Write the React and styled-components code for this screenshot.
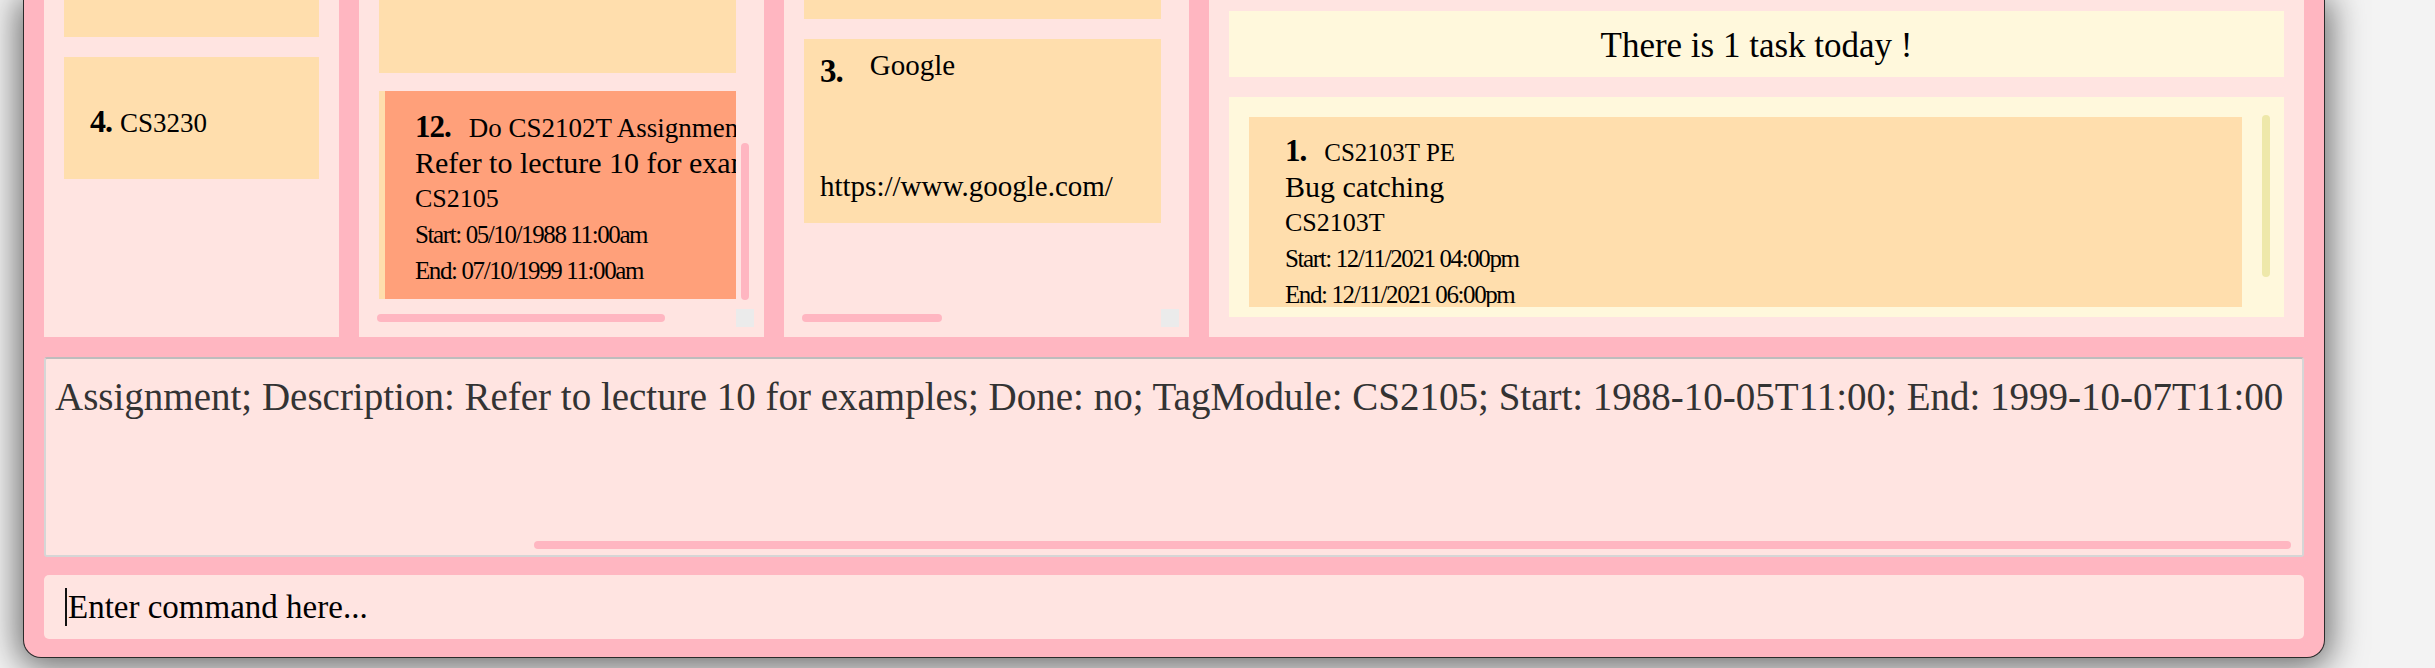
import React from 'react'
import styled, { createGlobalStyle } from 'styled-components'

const GlobalStyle = createGlobalStyle`
  html, body {
    margin: 0;
    padding: 0;
  }
  body {
    width: 2435px;
    height: 668px;
    overflow: hidden;
    background: #f3f3f3;
    font-family: 'Liberation Serif', 'Times New Roman', serif;
    color: #000;
  }
`

const Page = styled.div`
  height: 668px;
  box-sizing: border-box;
  padding-left: 23px;
  display: flex;
  align-items: flex-start;
`

const Window = styled.div`
  width: 2302px;
  height: 658px;
  box-sizing: border-box;
  background: #ffb6c1;
  border: 1px solid #2b2b2b;
  border-top: none;
  border-radius: 0 0 18px 18px;
  box-shadow: 0 4px 34px 6px rgba(0, 0, 0, 0.55);
  padding: 0 20px 18px;
  display: flex;
  flex-direction: column;
`

const PanelRow = styled.div`
  height: 337px;
  display: flex;
  gap: 20px;
`

const Panel = styled.div`
  width: ${(p) => p.$width}px;
  box-sizing: border-box;
  background: #ffe4e1;
  padding: ${(p) => p.$pad};
  display: flex;
  flex-direction: column;
  overflow: hidden;
`

const CardList = styled.div`
  display: flex;
  flex-direction: column;
  gap: ${(p) => p.$gap}px;
`

/* the tail of a card that is scrolled off the top */
const Stub = styled.div`
  height: ${(p) => p.$h}px;
  background: #ffdead;
  flex-shrink: 0;
`

const ModuleCard = styled.div`
  height: 122px;
  box-sizing: border-box;
  background: #ffdead;
  padding: 6px 26px 0;
  display: flex;
  align-items: baseline;
  align-content: center;
  flex-wrap: wrap;
  gap: 8px;
  white-space: nowrap;
`

const Index = styled.span`
  font-weight: bold;
  font-size: ${(p) => p.$size}px;
  letter-spacing: -1px;
`

const ModuleName = styled.span`
  font-size: 27px;
`

/* scroll pane: viewport, vertical bar, horizontal bar, corner */
const ScrollPane = styled.div`
  flex: 1;
  display: grid;
  grid-template-columns: minmax(0, 1fr) 18px;
  grid-template-rows: minmax(0, 1fr) 18px;
`

const Viewport = styled.div`
  overflow: hidden;
`

const VTrack = styled.div`
  display: flex;
  flex-direction: column;
  align-items: center;
`

const HTrack = styled.div`
  display: flex;
  align-items: center;
  margin-left: -2px;
`

const Thumb = styled.div`
  background: ${(p) => p.$color || '#ffb6c1'};
  border-radius: 4px;
  flex-shrink: 0;
  ${(p) =>
    p.$vertical
      ? `width: 8px; height: ${p.$size}px; margin-top: ${p.$offset}px;`
      : `height: 8px; width: ${p.$size}px; margin-left: ${p.$offset}px;`}
`

const Corner = styled.div`
  background: #ebebeb;
`

const TaskCard = styled.div`
  width: ${(p) => p.$width};
  box-sizing: border-box;
  flex-shrink: 0;
  background: ${(p) => (p.$selected ? '#ffa07a' : '#ffdead')};
  border-left: ${(p) => (p.$selected ? '6px solid #ffdead' : 'none')};
  padding: ${(p) => (p.$selected ? '17px 16px 10px 30px' : '15px 16px 10px 36px')};
  white-space: nowrap;
`

const TaskHead = styled.div`
  display: flex;
  align-items: baseline;
  gap: 18px;
  height: 37px;
  line-height: 37px;
`

const TaskName = styled.span`
  font-size: ${(p) => p.$size}px;
`

const Line = styled.div`
  line-height: 36px;
  font-size: ${(p) => p.$size}px;
  letter-spacing: ${(p) => p.$spacing || 0}px;
`

const LinkCard = styled.div`
  height: 184px;
  box-sizing: border-box;
  background: #ffdead;
  padding: 10px 16px 20px;
  display: flex;
  flex-direction: column;
  white-space: nowrap;
`

const LinkHead = styled.div`
  display: flex;
  align-items: flex-start;
  gap: 27px;
`

const LinkIndex = styled.span`
  font-weight: bold;
  font-size: 33px;
  line-height: 40px;
  padding-top: 2px;
  letter-spacing: -1px;
`

const LinkName = styled.span`
  font-size: 29px;
  line-height: 32px;
`

const LinkUrl = styled.div`
  margin-top: auto;
  font-size: 29px;
  line-height: 34px;
`

const TodayHeader = styled.div`
  height: 66px;
  flex-shrink: 0;
  box-sizing: border-box;
  padding-top: 4px;
  background: #fff8dc;
  display: flex;
  align-items: center;
  justify-content: center;
  font-size: 35px;
`

const TodayBox = styled.div`
  flex: 1;
  margin-top: 20px;
  background: #fff8dc;
  padding: 20px 10px 10px 20px;
  display: flex;
  min-height: 0;
`

const TodayViewport = styled.div`
  flex: 1;
  overflow: hidden;
`

const TodayTrack = styled.div`
  width: 28px;
  display: flex;
  justify-content: flex-end;
  padding-right: 4px;
  margin-top: -2px;
`

const ResultBox = styled.div`
  height: 200px;
  box-sizing: border-box;
  margin-top: 20px;
  background: #ffe4e1;
  border: 2px solid #d6d6d6;
  border-top-color: #bdbdbd;
  border-radius: 3px;
  display: flex;
  flex-direction: column;
  overflow: hidden;
`

const ResultText = styled.div`
  flex: 1;
  padding: 13px 9px 0;
  font-size: 39px;
  line-height: 50px;
  color: #333;
  white-space: nowrap;
`

const ResultTrack = styled.div`
  height: 14px;
  display: flex;
  align-items: flex-start;
  justify-content: flex-end;
  padding-right: 11px;
`

const CommandBox = styled.div`
  height: 64px;
  box-sizing: border-box;
  margin-top: 18px;
  background: #ffe4e1;
  border-radius: 5px;
  padding-left: 21px;
  display: flex;
  align-items: center;
  font-size: 33px;
`

const Caret = styled.span`
  width: 2px;
  height: 38px;
  background: #111;
  margin-right: 1px;
`

const Task = ({ task, selected, width, nameSize }) => (
  <TaskCard $selected={selected} $width={width}>
    <TaskHead>
      <Index $size={31}>{task.index}.</Index>
      <TaskName $size={nameSize}>{task.name}</TaskName>
    </TaskHead>
    <Line $size={30}>{task.description}</Line>
    <Line $size={26}>{task.module}</Line>
    <Line $size={25} $spacing={-1.4}>
      Start: {task.start}
    </Line>
    <Line $size={25} $spacing={-1.4}>
      End: {task.end}
    </Line>
  </TaskCard>
)

const selectedTask = {
  index: 12,
  name: 'Do CS2102T Assignment',
  description: 'Refer to lecture 10 for examples',
  module: 'CS2105',
  start: '05/10/1988 11:00am',
  end: '07/10/1999 11:00am',
}

const todayTask = {
  index: 1,
  name: 'CS2103T PE',
  description: 'Bug catching',
  module: 'CS2103T',
  start: '12/11/2021 04:00pm',
  end: '12/11/2021 06:00pm',
}

const App = () => {
  return (
    <Page>
      <GlobalStyle />
      <Window>
        <PanelRow>
          <Panel $width={295} $pad="0 20px">
            <CardList $gap={20}>
              <Stub $h={37} />
              <ModuleCard>
                <Index $size={32}>4.</Index>
                <ModuleName>CS3230</ModuleName>
              </ModuleCard>
            </CardList>
          </Panel>

          <Panel $width={405} $pad="0 10px 10px 20px">
            <ScrollPane>
              <Viewport>
                <CardList $gap={18}>
                  <Stub $h={73} />
                  <Task task={selectedTask} selected width="480px" nameSize={27} />
                </CardList>
              </Viewport>
              <VTrack>
                <Thumb $vertical $offset={143} $size={157} />
              </VTrack>
              <HTrack>
                <Thumb $offset={0} $size={288} />
              </HTrack>
              <Corner />
            </ScrollPane>
          </Panel>

          <Panel $width={405} $pad="0 10px 10px 20px">
            <ScrollPane>
              <Viewport>
                <CardList $gap={20}>
                  <Stub $h={19} />
                  <LinkCard>
                    <LinkHead>
                      <LinkIndex>3.</LinkIndex>
                      <LinkName>Google</LinkName>
                    </LinkHead>
                    <LinkUrl>https://www.google.com/</LinkUrl>
                  </LinkCard>
                </CardList>
              </Viewport>
              <VTrack />
              <HTrack>
                <Thumb $offset={0} $size={140} />
              </HTrack>
              <Corner />
            </ScrollPane>
          </Panel>

          <Panel $width={1095} $pad="11px 20px 20px">
            <TodayHeader>There is 1 task today !</TodayHeader>
            <TodayBox>
              <TodayViewport>
                <Task task={todayTask} width="100%" nameSize={25} />
              </TodayViewport>
              <TodayTrack>
                <Thumb $vertical $offset={0} $size={162} $color="#eee8aa" />
              </TodayTrack>
            </TodayBox>
          </Panel>
        </PanelRow>

        <ResultBox>
          <ResultText>
            Assignment; Description: Refer to lecture 10 for examples; Done: no;
            TagModule: CS2105; Start: 1988-10-05T11:00; End: 1999-10-07T11:00
          </ResultText>
          <ResultTrack>
            <Thumb $offset={0} $size={1757} />
          </ResultTrack>
        </ResultBox>

        <CommandBox>
          <Caret />
          Enter command here...
        </CommandBox>
      </Window>
    </Page>
  )
}

export default App
